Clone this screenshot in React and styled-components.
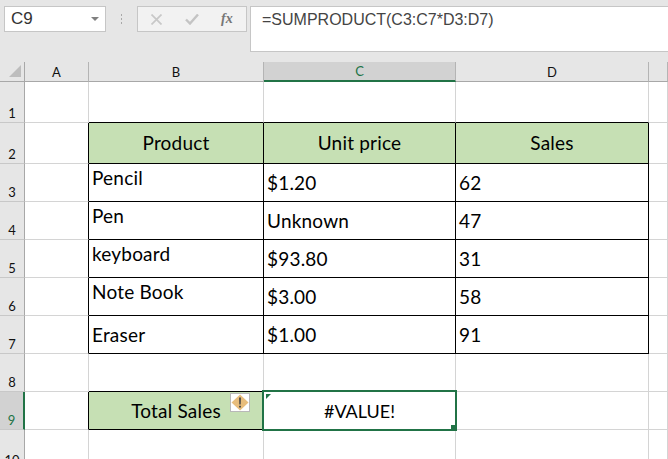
import { Fragment } from "react";
import styled, { createGlobalStyle } from "styled-components";

const GlobalStyle = createGlobalStyle`
  html, body {
    margin: 0;
    padding: 0;
    background: #fff;
  }
  body {
    width: 668px;
    height: 459px;
    overflow: hidden;
    font-family: "Lato", "Liberation Sans", sans-serif;
  }
`

const Page = styled.div`
  width: 668px;
  height: 459px;
  overflow: hidden;
  background: #fff;
`
const Toolbar = styled.div`
  height: 62px;
  box-sizing: border-box;
  background: #e6e6e6;
  padding: 6px 0 0 4px;
  display: flex;
  align-items: flex-start;
`
const NameBox = styled.div`
  width: 102px;
  height: 26px;
  box-sizing: border-box;
  background: #fff;
  border: 1px solid #c6c6c6;
  display: flex;
  align-items: center;
  justify-content: space-between;
  padding: 0 6px 0 6px;
  font-family: "Liberation Sans", sans-serif;
  font-size: 17px;
  color: #333;
`
const Caret = styled.div`
  width: 0;
  height: 0;
  border-left: 4px solid transparent;
  border-right: 4px solid transparent;
  border-top: 4px solid #808080;
`
const Grip = styled.div`
  width: 3px;
  height: 12px;
  margin: 7px 14px 0 14px;
  background-image: radial-gradient(circle, #a8a8a8 1px, transparent 1px);
  background-size: 3px 4px;
`
const ActionBox = styled.div`
  width: 110px;
  height: 26px;
  box-sizing: border-box;
  background: #f2f2f2;
  border: 1px solid #c6c6c6;
  display: flex;
  align-items: center;
  padding-left: 13px;
  gap: 23px;
`
const Fx = styled.span`
  font-family: "Liberation Serif", serif;
  font-style: italic;
  font-weight: 700;
  font-size: 14px;
  color: #777;
  margin-left: -1px;
`
const FormulaBar = styled.div`
  flex: 1;
  height: 46px;
  box-sizing: border-box;
  margin-left: 3px;
  background: #fff;
  border: 1px solid #c6c6c6;
  border-right: none;
  padding: 3px 0 0 11px;
  font-family: "Liberation Sans", sans-serif;
  font-size: 16px;
  line-height: 20px;
  color: #444;
`
const Sheet = styled.div`
  display: grid;
  grid-template-columns: 25px 64px 175px 192px 193px 19px;
  grid-template-rows: 20px 41px 41px 38px 38px 38px 38px 38px 38px 38px 40px;
`
const ColumnHead = styled.div`
  box-sizing: border-box;
  background: ${(p) => (p.$active ? "#d2d2d2" : "#e6e6e6")};
  border-right: 1px solid #b4b4b4;
  border-bottom: ${(p) => (p.$active ? "2px solid #217346" : "1px solid #a8a8a8")};
  color: ${(p) => (p.$active ? "#217346" : "#111")};
  display: flex;
  align-items: center;
  justify-content: center;
  font-size: 13px;
`
const Corner = styled(ColumnHead)`
  position: relative;
  border-right: 1px solid #a8a8a8;

  &::after {
    content: "";
    position: absolute;
    right: 3px;
    bottom: 4px;
    border-left: 12px solid transparent;
    border-bottom: 12px solid #bdbdbd;
  }
`
const RowHead = styled.div`
  box-sizing: border-box;
  background: ${(p) => (p.$active ? "#d2d2d2" : "#e6e6e6")};
  border-right: ${(p) => (p.$active ? "2px solid #217346" : "1px solid #a8a8a8")};
  border-bottom: 1px solid #c8c8c8;
  color: ${(p) => (p.$active ? "#217346" : "#111")};
  display: flex;
  align-items: flex-end;
  justify-content: center;
  padding-bottom: 1px;
  font-size: 13px;
  line-height: 16px;
`
const Cell = styled.div`
  position: relative;
  box-sizing: border-box;
  min-width: 0;
  background: ${(p) => (p.$fill ? "#c6e0b4" : "#fff")};
  border-right: 1px solid ${(p) => (p.$inkRight ? "#000" : "#d4d4d4")};
  border-bottom: 1px solid ${(p) => (p.$inkBottom ? "#000" : "#d4d4d4")};
  color: #000;
  font-size: 19px;
  letter-spacing: 0.2px;
  line-height: 22px;
  display: flex;
  padding: ${(p) => p.$pad || "0 3px"};
  align-items: ${(p) => p.$v || "center"};
  justify-content: ${(p) => (p.$center ? "center" : "flex-start")};
`
const ErrorValue = styled.span`
  font-size: 18px;
  letter-spacing: 0;
`
const WarningTag = styled.div`
  position: absolute;
  left: 141px;
  top: 1px;
  z-index: 2;
  width: 20px;
  height: 19px;
  box-sizing: border-box;
  background: #fff;
  border: 1px solid #b8b8b8;
  display: flex;
  align-items: center;
  justify-content: center;
`
const Selection = styled.div`
  position: absolute;
  left: -2px;
  top: -2px;
  right: -2px;
  bottom: -2px;
  z-index: 2;
  border: 2px solid #217346;
  pointer-events: none;
`
const FillHandle = styled.div`
  position: absolute;
  right: -2px;
  bottom: -2px;
  width: 6px;
  height: 6px;
  background: #217346;
`
const ErrorFlag = styled.div`
  position: absolute;
  left: 2px;
  top: 2px;
  border-top: 5px solid #217346;
  border-right: 5px solid transparent;
`

const columns = ["A", "B", "C", "D"];

// row number, product, price, sales, padding of the product cell
const products = [
  [3, "Pencil", "$1.20", "62", "3px 3px 0"],
  [4, "Pen", "Unknown", "47", "3px 3px 0"],
  [5, "keyboard", "$93.80", "31", "3px 3px 0"],
  [6, "Note Book", "$3.00", "58", "3px 3px 0"],
  [7, "Eraser", "$1.00", "91", "8px 3px 0"],
];

const App = () => {
  return (
    <Page>
      <GlobalStyle />
      <Toolbar>
        <NameBox>
          C9
          <Caret />
        </NameBox>
        <Grip />
        <ActionBox>
          <svg width="11" height="11" viewBox="0 0 11 11">
            <path d="M.5.5l10 10M10.500.5l-10 10" stroke="#c8c8c8" strokeWidth="1.7" fill="none" />
          </svg>
          <svg width="14" height="11" viewBox="0 0 14 11">
            <path d="M1 5.500l4 4 8-9" stroke="#c4c4c4" strokeWidth="2.400" fill="none" />
          </svg>
          <Fx>fx</Fx>
        </ActionBox>
        <FormulaBar>=SUMPRODUCT(C3:C7*D3:D7)</FormulaBar>
      </Toolbar>
      <Sheet>
        <Corner />
        {columns.map((c) => (
          <ColumnHead key={c} $active={c === "C"}>{c}</ColumnHead>
        ))}
        <ColumnHead />

        <RowHead>1</RowHead>
        <Cell />
        <Cell $inkBottom />
        <Cell $inkBottom />
        <Cell $inkBottom />
        <Cell />

        <RowHead>2</RowHead>
        <Cell $inkRight />
        <Cell $fill $center $inkRight $inkBottom>Product</Cell>
        <Cell $fill $center $inkRight $inkBottom>Unit price</Cell>
        <Cell $fill $center $inkRight $inkBottom>Sales</Cell>
        <Cell />

        {products.map(([row, name, price, sales, namePad]) => (
          <Fragment key={row}>
            <RowHead>{row}</RowHead>
            <Cell $inkRight />
            <Cell $inkRight $inkBottom $v="flex-start" $pad={namePad}>{name}</Cell>
            <Cell $inkRight $inkBottom $v="flex-end" $pad="0 3px 7px">{price}</Cell>
            <Cell $inkRight $inkBottom $v="flex-end" $pad="0 3px 7px">{sales}</Cell>
            <Cell />
          </Fragment>
        ))}

        <RowHead>8</RowHead>
        <Cell />
        <Cell $inkBottom />
        <Cell />
        <Cell />
        <Cell />

        <RowHead $active>9</RowHead>
        <Cell $inkRight />
        <Cell $fill $center $inkRight $inkBottom>
          Total Sales
          <WarningTag>
            <svg width="18" height="17" viewBox="0 0 18 17">
              <path d="M9 0.500L17.500 8.500L9 16.500L0.500 8.500Z" fill="#e8bd7c" />
              <path d="M8.100 3.500h1.800l-.2 7H8.300ZM8.100 11.700h1.800v1.800H8.100Z" fill="#444" />
            </svg>
          </WarningTag>
        </Cell>
        <Cell $center>
          <ErrorValue>#VALUE!</ErrorValue>
          <Selection>
            <ErrorFlag />
            <FillHandle />
          </Selection>
        </Cell>
        <Cell />
        <Cell />

        <RowHead>10</RowHead>
        <Cell />
        <Cell />
        <Cell />
        <Cell />
        <Cell />
      </Sheet>
    </Page>
  );
};

export default App;
